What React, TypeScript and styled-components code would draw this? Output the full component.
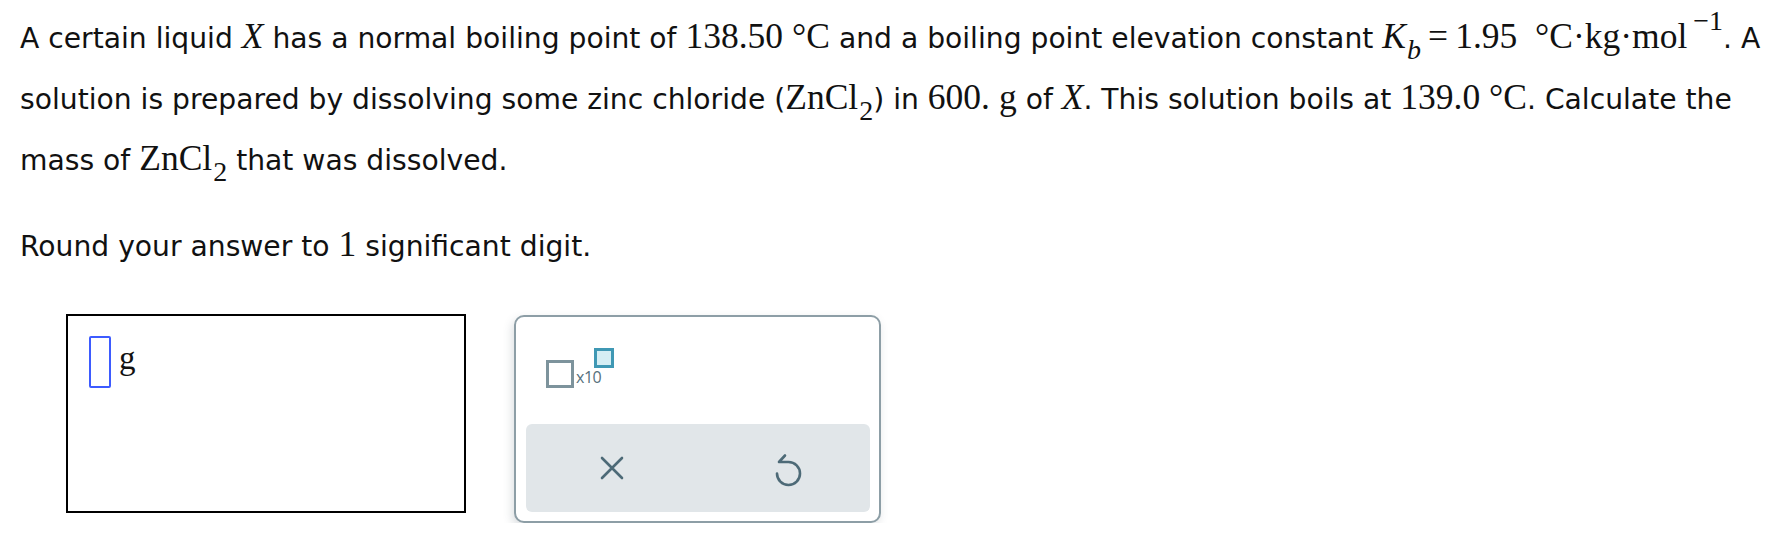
import React from "react";
import styled, { createGlobalStyle } from "styled-components";

const GlobalStyle = createGlobalStyle`
    html, body {
        margin: 0;
        padding: 0;
        background: #fff;
    }
`;

const Page = styled.div`
    padding: 8px 20px 0 20px;
    font-family: "DejaVu Sans", Verdana, sans-serif;
    font-size: 28.2px;
    color: #111;
`;

const Para = styled.p<{ $gap?: number }>`
    margin: ${({ $gap }) => $gap ?? 0}px 0 0 0;
    line-height: 61px;
    white-space: nowrap;
`;

const M = styled.span<{ $it?: boolean }>`
    font-family: "Liberation Serif", "Times New Roman", serif;
    font-size: 35.5px;
    line-height: 1;
    font-style: ${({ $it }) => ($it ? "italic" : "normal")};
`;

const Sub = styled.span<{ $it?: boolean }>`
    font-family: "Liberation Serif", "Times New Roman", serif;
    font-size: 28px;
    font-style: ${({ $it }) => ($it ? "italic" : "normal")};
    vertical-align: -11px;
    line-height: 0;
    margin-left: 1px;
`;

const Sup = styled.span`
    font-family: "Liberation Serif", "Times New Roman", serif;
    font-size: 28px;
    vertical-align: 18px;
    line-height: 0;
    margin-left: 6px;
`;

const AnswerRow = styled.div`
    display: flex;
    align-items: flex-start;
    gap: 48px;
    margin: 37px 0 0 46px;
`;

const AnswerBox = styled.div`
    box-sizing: border-box;
    width: 400px;
    height: 199px;
    border: 2px solid #000;
    padding: 20px 21px;
    display: flex;
    align-items: flex-start;
    gap: 8px;
`;

const Slot = styled.div`
    box-sizing: border-box;
    width: 22px;
    height: 52px;
    border: 2px solid #3d5bff;
    border-radius: 2px;
`;

const Unit = styled.span`
    font-family: "Liberation Serif", "Times New Roman", serif;
    font-size: 33px;
    line-height: 40px;
    margin-top: 2px;
`;

const Panel = styled.div`
    box-sizing: border-box;
    width: 367px;
    height: 208px;
    margin-top: 1px;
    border: 2px solid #8d9ea6;
    border-radius: 10px;
    background: #fff;
    box-shadow: -2px 4px 10px rgba(60, 80, 90, 0.18);
    padding: 0 9px 9px 10px;
    display: flex;
    flex-direction: column;
`;

const Tools = styled.div`
    flex: 1;
    display: flex;
    align-items: flex-start;
    padding: 31px 0 0 20px;
`;

const SciButton = styled.div`
    display: flex;
    align-items: flex-end;
    height: 40px;
`;

const BigSquare = styled.div`
    box-sizing: border-box;
    width: 28px;
    height: 28px;
    border: 3px solid #7d939c;
`;

const Times10 = styled.span`
    font-family: "Open Sans", "DejaVu Sans", sans-serif;
    font-size: 16px;
    color: #55707c;
    margin-left: 2px;
    letter-spacing: -0.5px;
`;

const SmallSquare = styled.div`
    box-sizing: border-box;
    width: 20px;
    height: 20px;
    border: 3px solid #3f98b4;
    background: #d5eef4;
    align-self: flex-start;
    margin-left: -7px;
`;

const ActionBar = styled.div`
    height: 88px;
    display: flex;
    background: #e1e6e9;
    border-radius: 6px;
`;

const ActionButton = styled.button`
    flex: 1;
    border: none;
    background: transparent;
    display: flex;
    align-items: center;
    justify-content: center;
    padding: 0;
    cursor: pointer;
`;

const App = () => {
    return (
        <>
            <GlobalStyle />
            <Page>
                <Para>
                    A certain liquid <M $it>X</M> has a normal boiling point of <M>138.50</M> <M>°C</M> and a boiling point elevation constant{" "}
                    <M $it>K</M><Sub $it>b</Sub><M>&thinsp;=&thinsp;1.95&nbsp;&nbsp;°C·kg·mol</M><Sup>−1</Sup>. A
                    <br />
                    solution is prepared by dissolving some zinc chloride (<M>ZnCl</M><Sub>2</Sub>) in <M>600.</M> <M>g</M> of <M $it>X</M>. This solution boils at <M>139.0</M> <M>°C</M>. Calculate the
                    <br />
                    mass of <M>ZnCl</M><Sub>2</Sub> that was dissolved.
                </Para>
                <Para $gap={25}>
                    Round your answer to <M>1</M> significant digit.
                </Para>
                <AnswerRow>
                    <AnswerBox>
                        <Slot />
                        <Unit>g</Unit>
                    </AnswerBox>
                    <Panel>
                        <Tools>
                            <SciButton>
                                <BigSquare />
                                <Times10>x10</Times10>
                                <SmallSquare />
                            </SciButton>
                        </Tools>
                        <ActionBar>
                            <ActionButton aria-label="clear">
                                <svg width="24" height="24" viewBox="0 0 24 24">
                                    <path d="M2 2 L22 22 M22 2 L2 22" stroke="#4d6a77" strokeWidth="2.6" strokeLinecap="round" fill="none" />
                                </svg>
                            </ActionButton>
                            <ActionButton aria-label="undo">
                                <svg width="40" height="42" viewBox="0 0 40 42" style={{ marginLeft: 6, marginTop: 2 }}>
                                    <path
                                        d="M18 7.5 L12 14 L21.5 14 A11.5 11.5 0 1 1 10 25.5"
                                        stroke="#4d6a77"
                                        strokeWidth="2.6"
                                        strokeLinecap="round"
                                        strokeLinejoin="round"
                                        fill="none"
                                    />
                                </svg>
                            </ActionButton>
                        </ActionBar>
                    </Panel>
                </AnswerRow>
            </Page>
        </>
    );
};

export default App;
